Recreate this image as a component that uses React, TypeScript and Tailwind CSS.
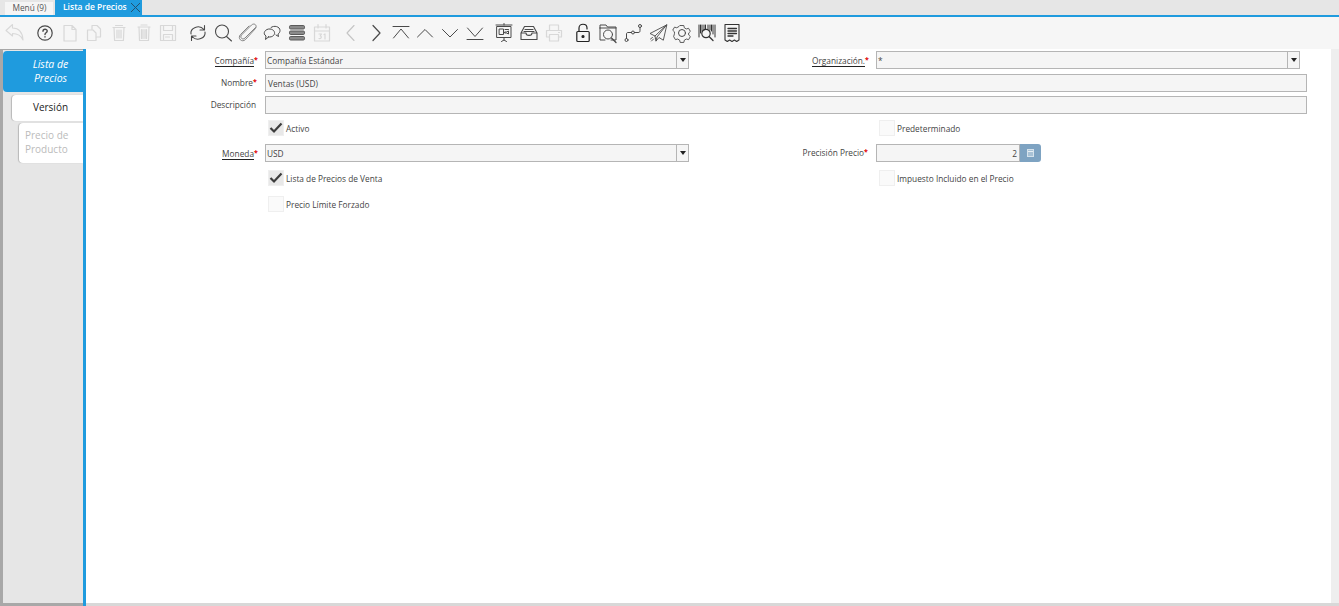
import type { ReactNode } from "react";

const ink = "#4a4a4a";
const off = "#d8d8d8";

function Ico({ c = ink, w = 1.2, children }: { c?: string; w?: number; children: ReactNode }) {
  return (
    <svg width="24" height="24" viewBox="0 0 24 24" fill="none" stroke={c} strokeWidth={w} strokeLinecap="round" strokeLinejoin="round">
      {children}
    </svg>
  );
}

const icons: Record<string, ReactNode> = {
  undo: <Ico c={off} w={1.1}><path d="M3 9.500L9.500 3.500v3.500c6 0 10 4 10.500 12-2-4.500-5-6.500-10.500-6.500v2.500z" /></Ico>,
  help: <Ico><circle cx="12" cy="12" r="7.200" /><path d="M10 10.200c0-2.600 4.200-2.600 4.200-.1 0 1.700-2.200 1.700-2.200 3.400M12 15.600v.4" strokeWidth="1.400" /></Ico>,
  doc: <Ico c={off}><path d="M6 4.500h8l4 4v11.500H6zM14 4.500v4h4" /></Ico>,
  copy: <Ico c={off}><path d="M10 8V4.500h5l3.500 3.500v8H15M5.500 9H11l3 3v7.500H5.500z" /></Ico>,
  trash: <Ico c={off}><path d="M8.500 4.500h7M6 6.500h12M7 6.500l.6 13h8.800l.6-13M10 9v8M12 9v8M14 9v8" /></Ico>,
  trash2: <Ico c={off}><path d="M9 4h6M6 6h12M7 6l.5 13.500h9L17 6M9.500 8.500v9M11 8.500v9M13 8.500v9M14.500 8.500v9" /></Ico>,
  save: <Ico c={off}><path d="M4.500 4.500h15v15h-15zM7.500 4.500v5h9v-5M7.500 19.500v-6h9v6M9.500 16h4" /></Ico>,
  refresh: <Ico w={1.1}><path d="M5 13c-1-6 8-10 13-4.500M18.500 4.500v4.500H14M19 11c1 6-8 10-13 4.500M5.500 19.500V15H10" /></Ico>,
  find: <Ico w={1.1}><circle cx="11" cy="10.500" r="6.500" /><path d="M15.500 15.500l5 4.500" /></Ico>,
  clip: <Ico w={0.9} c="#777"><path d="M19.500 6.500L9 17c-2.500 2.500-5.500-.5-3.500-3L15.500 4c3-2.500 6 .5 4 3.500L9.500 18.500c-3.500 3.500-8.500-1-5-5L13 5" /></Ico>,
  chat: <Ico w={1}><path d="M8.500 16l-3 2.500.5-3.500c-4-2.500-.5-7.500 4-7 4 .3 6 4 3.500 6.500-1.300 1.200-3 1.700-5 1.500z" /><path d="M11 6.500c3-2.500 9-1 9 3 0 1.700-1 3-2 3.500l.5 2.500-2.500-1.500" /></Ico>,
  grid: <svg width="24" height="24" viewBox="0 0 24 24" fill="none" stroke="#5a5a5a" strokeWidth="1"><rect x="4.500" y="4.500" width="15" height="3.500" rx="1.200" fill="#8a8a8a" /><rect x="4.500" y="10" width="15" height="3.500" rx="1.200" fill="#8a8a8a" /><rect x="4.500" y="15.500" width="15" height="3.500" rx="1.200" fill="#8a8a8a" /></svg>,
  cal: <Ico c={off}><path d="M4.500 6h15v14h-15zM4.500 10h15M8 3.500V7M16 3.500V7" /><path d="M9 13h2.500l-1.300 2c1.800 0 1.500 3-1.200 2.500M14 13.500l1-.5v5" /></Ico>,
  prev: <Ico w={1.1} c="#c4c4c4"><path d="M15 4.500L8 12l7 7.500" /></Ico>,
  next: <Ico w={1.200}><path d="M9 4.500l7 7.500-7 7.500" /></Ico>,
  first: <Ico w={1}><path d="M4 5.500h16M4.500 17L12 8l7.500 9" /></Ico>,
  up: <Ico w={1}><path d="M4.500 16L12 8.500l7.500 7.500" /></Ico>,
  down: <Ico w={1}><path d="M4.500 8.500L12 16l7.500-7.500" /></Ico>,
  last: <Ico w={1}><path d="M4.500 7L12 15.500 19.500 7M4 18.500h16" /></Ico>,
  report: <Ico w={1}><path d="M5 5.500h14v11H5zM4 4h16M12 2.500V4M12 16.500v2.500M9.500 20.500l2.500-1.500 2.500 1.500M7.500 8h4v5.500h-4zM13 8.500h3.500M13 11h1.500l2-1v3l-2-1H13z" /></Ico>,
  inbox: <Ico w={1.100}><path d="M7.500 5.500h9L20 12v6.500H4V12zM4 12h5c0 3.200 6 3.200 6 0h5M8 8.500h8M7 10.500h10" /></Ico>,
  print: <Ico c={off}><path d="M7.500 9V4h9v5M7.500 16H4.500V9.500h15V16h-3M7.500 13.500h9v6.500h-9zM16.500 11.500h1" /></Ico>,
  lock: <svg width="24" height="24" viewBox="0 0 24 24" fill="none" stroke="#222" strokeWidth="1.200" strokeLinecap="round"><path d="M8 10.500V7c0-5 8-5 8 0v1" /><rect x="5.800" y="10.500" width="12.400" height="10" rx="1" /><circle cx="12" cy="15.500" r="1" fill="#222" /></svg>,
  zoomDoc: <Ico w={1}><path d="M4 7V4h6l1.500 2H20v13h-5M4 7h16M4 7v12h5" /><circle cx="12" cy="13.500" r="4.500" /><path d="M15.500 17l4.500 4.500" strokeWidth="1.300" /></Ico>,
  flow: <Ico w={1}><circle cx="5.500" cy="19" r="1.500" /><circle cx="12" cy="11.500" r="1.500" /><circle cx="19" cy="5" r="1.500" /><path d="M5.500 17.500V13c0-1 .5-1.500 1.500-1.500h3.500M13.500 11.500H17c1.500 0 2-.5 2-2V6.500" /></Ico>,
  send: <Ico w={0.9}><path d="M20.500 4L4 12.500l5 2.500 1 5 3-3.500 4 2.500zM20.500 4L9 15M20.500 4L11 16l-1 4M7.500 18l-2 2M6.500 16.500l-2 1.500" /></Ico>,
  gear: <Ico w={1}><path d="M10 3.800h4l.6 2.500 2.200 1.300 2.500-.7 2 3.400-1.900 1.800v2.200l1.900 1.800-2 3.400-2.500-.7-2.200 1.300-.6 2.500h-4l-.6-2.500-2.200-1.300-2.500.7-2-3.400L3.600 13v-2.200L1.700 9l2-3.400 2.500.7 2.200-1.300z" transform="translate(1.200 1.100) scale(.9)" /><circle cx="12" cy="12" r="3.500" /></Ico>,
  barcode: <svg width="24" height="24" viewBox="0 0 24 24" fill="none" stroke="#333" strokeLinecap="round"><path d="M4 4v12M5.500 4v8M7 4v6M9 4v5M10.500 4v4M13 4v4M15 4v5M16.500 4v6M18 4v9M20 4v12" strokeWidth="1" /><circle cx="11" cy="12.500" r="4.200" strokeWidth="1.200" /><path d="M14 15.500l4 4" strokeWidth="1.300" /></svg>,
  invoice: <Ico w={1.1} c="#333"><path d="M5 3.500h14v15.500l-2.300 1.500-2.300-1.500-2.400 1.500-2.400-1.500-2.300 1.500L5 19z" /><path d="M8 7.500h8.500M8 10h8.500M8 12.500h8.500M8 15h5" strokeWidth="1.300" /></Ico>,
};

const toolbar = [
  { key: "undo", items: ["undo"] },
  { key: "a", items: ["help", "doc", "copy", "trash", "trash2", "save"] },
  { key: "b", items: ["refresh", "find", "clip", "chat", "grid", "cal"] },
  { key: "c", items: ["prev", "next", "first", "up", "down", "last"] },
  { key: "d", items: ["report", "inbox", "print"] },
  { key: "e", items: ["lock", "zoomDoc", "flow", "send", "gear", "barcode", "invoice"] },
];

function Label({ text, req, link }: { text: string; req?: boolean; link?: boolean }) {
  return (
    <div className={`flex h-[18px] items-center justify-end text-[8.300px] text-[#444] ${link ? "pt-[2px]" : "pr-px"}`}>
      <span className={link ? "border-b border-[#222] leading-[10px]" : "leading-[10px]"}>{text}</span>
      {req && <span className="relative top-[-1px] w-[3px] text-[7px] font-bold leading-[10px] text-[#e00000]">*</span>}
    </div>
  );
}

function Field({ value, right }: { value?: string; right?: boolean }) {
  return (
    <div className={`flex h-[18px] w-full items-center border border-[#b5b5b5] bg-[#f5f5f5] px-[2px] pt-[2px] text-[8.300px] text-[#444] ${right ? "justify-end" : ""}`}>
      {value}
    </div>
  );
}

function Combo({ value }: { value: string }) {
  return (
    <div className="flex h-[18px] w-full border border-[#b5b5b5] bg-[#f5f5f5] text-[8.300px] text-[#444]">
      <div className="flex flex-1 items-center px-px pt-[2px]">{value}</div>
      <div className="flex w-[12px] items-center justify-center rounded-r-[2px] border-l border-[#b5b5b5]">
        <div className="h-0 w-0 border-x-[3px] border-t-[4px] border-x-transparent border-t-[#222]" />
      </div>
    </div>
  );
}

function Check({ text, on }: { text: string; on?: boolean }) {
  return (
    <div className="ml-[3px] flex h-4 items-center gap-[2px] text-[8.300px] text-[#444]">
      <div className={`flex h-4 w-4 items-center justify-center border border-[#efefef] ${on ? "bg-[#e8e8e8]" : "bg-[#fafafa]"}`}>
        {on && (
          <svg width="14" height="12" viewBox="0 0 14 12" fill="none" stroke="#3c3c3c" strokeWidth="2.200">
            <path d="M1.500 6l3.500 3.500L12.500 1.500" />
          </svg>
        )}
      </div>
      <span className="pt-[2px]">{text}</span>
    </div>
  );
}

export default function App() {
  return (
    <div className="flex h-[606px] w-[1339px] flex-col overflow-hidden bg-white font-['Open_Sans',sans-serif]">
      {/* window tabs */}
      <div className="flex h-[17px] shrink-0 items-end gap-[2px] border-b-2 border-[#1f9bde] bg-[#e6e6e6] pl-[5px]">
        <div className="flex h-[13px] w-[48px] items-center justify-center bg-[#f5f5f5] pl-px text-[8.300px] text-[#555]">Menú (9)</div>
        <div className="flex h-[15px] w-[87px] items-center bg-[#1f9bde] pl-[8px] text-[8.500px] font-semibold text-white">
          <span className="flex-1">Lista de Precios</span>
          <svg width="11" height="11" viewBox="0 0 11 11" stroke="#24506e" strokeWidth="1" className="mr-px">
            <path d="M1 1l9 9M10 1l-9 9" />
          </svg>
        </div>
      </div>

      {/* toolbar */}
      <div className="flex h-[32px] shrink-0 items-center gap-[5px] bg-[#f6f6f6] pl-[3px]">
        {toolbar.map((group) => (
          <div key={group.key} className="flex">
            {group.items.map((name) => (
              <div key={name} className="flex w-[24.700px] justify-center">
                {icons[name]}
              </div>
            ))}
          </div>
        ))}
      </div>

      <div className="flex min-h-0 flex-1">
        {/* tabs on the left */}
        <div className="flex w-[83px] shrink-0 flex-col items-end border-b-[3px] border-l-[3px] border-t border-[#a8a8a8] bg-[#e6e6e6] pt-px">
          <div className="flex h-[41px] w-[80px] flex-col items-center justify-center rounded-l-[4px] bg-[#1f9bde] pb-[2px] pl-[15px] text-center text-[10.500px] italic leading-[14px] text-white">
            <span>Lista de</span>
            <span>Precios</span>
          </div>
          <div className="mt-[3px] flex h-[26px] w-[71px] items-center justify-center rounded-l-[4px] bg-white pb-[2px] pl-[6px] text-[10px] text-[#222] shadow-[-1px_0_1px_rgba(0,0,0,0.2)]">Versión</div>
          <div className="mt-[2px] flex h-[40px] w-[64px] flex-col justify-center rounded-l-[4px] bg-white pb-[2px] pl-[6px] text-[10px] leading-[14px] text-[#bbb] shadow-[-1px_0_1px_rgba(0,0,0,0.2)]">
            <span>Precio de</span>
            <span>Producto</span>
          </div>
        </div>
        <div className="w-[3px] shrink-0 bg-[#1f9bde]" />

        {/* form */}
        <div className="flex min-w-0 flex-1 flex-col border-b-[3px] border-[#d8d8d8]">
          <div className="flex flex-1">
            <div className="flex-1 pt-[2px]">
              <div className="grid grid-cols-[171px_424px_171px_431px] gap-x-2">
                <Label text="Compañía" req link />
                <Combo value="Compañía Estándar" />
                <Label text="Organización." req link />
                <div className="w-[424px]">
                  <Combo value="*" />
                </div>

                <div className="col-span-4 h-[5px]" />
                <Label text="Nombre" req />
                <div className="col-span-3">
                  <Field value="Ventas (USD)" />
                </div>

                <div className="col-span-4 h-1" />
                <Label text="Descripción" />
                <div className="col-span-3">
                  <Field />
                </div>

                <div className="col-span-4 h-[6px]" />
                <div />
                <Check text="Activo" on />
                <div />
                <Check text="Predeterminado" />

                <div className="col-span-4 h-2" />
                <Label text="Moneda" req link />
                <Combo value="USD" />
                <Label text="Precisión Precio" req />
                <div className="flex">
                  <div className="w-[144px]">
                    <Field value="2" right />
                  </div>
                  <div className="flex h-[18px] w-[21px] items-center justify-center rounded-r-[3px] bg-[#7ea3c2]">
                    <div className="flex h-[8px] w-[7px] flex-col gap-px border border-[#d5e2ec] bg-[#a9c2d6] pt-px">
                      <div className="h-px bg-[#e8eff4]" />
                    </div>
                  </div>
                </div>

                <div className="col-span-4 h-2" />
                <div />
                <Check text="Lista de Precios de Venta" on />
                <div />
                <Check text="Impuesto Incluido en el Precio" />

                <div className="col-span-4 h-[10px]" />
                <div />
                <Check text="Precio Límite Forzado" />
              </div>
            </div>
            <div className="w-[8px] shrink-0 bg-[#eeeeee]" />
          </div>
        </div>
      </div>
    </div>
  );
}
